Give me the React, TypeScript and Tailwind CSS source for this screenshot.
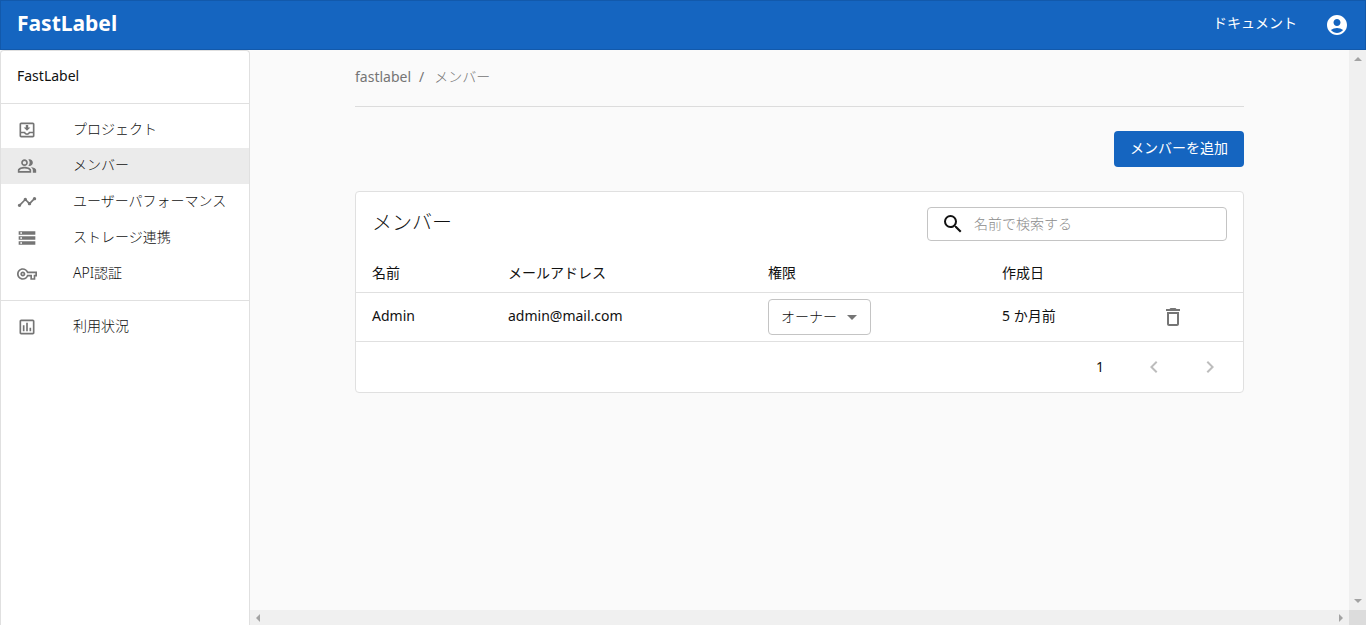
import { useState } from "react";
import type { IconType } from "react-icons";
import {
  MdAccountCircle,
  MdArrowDropDown,
  MdDeleteOutline,
  MdKeyboardArrowLeft,
  MdKeyboardArrowRight,
  MdOutlineAssessment,
  MdOutlineMoveToInbox,
  MdOutlinePeopleAlt,
  MdOutlineVpnKey,
  MdSearch,
  MdStorage,
  MdTimeline,
} from "react-icons/md";

type NavItem = { label: string; icon: IconType; active?: boolean };

const mainNav: NavItem[] = [
  { label: "プロジェクト", icon: MdOutlineMoveToInbox },
  { label: "メンバー", icon: MdOutlinePeopleAlt, active: true },
  { label: "ユーザーパフォーマンス", icon: MdTimeline },
  { label: "ストレージ連携", icon: MdStorage },
  { label: "API認証", icon: MdOutlineVpnKey },
];

const usageNav: NavItem[] = [{ label: "利用状況", icon: MdOutlineAssessment }];

const members = [
  { name: "Admin", email: "admin@mail.com", role: "owner", createdAt: "5 か月前" },
];

function Header() {
  return (
    <header className="flex h-[50px] shrink-0 items-center justify-between border border-[#1259ab] bg-[#1565c0] px-4 text-white">
      <a href="#" className="pb-1 text-[21px] font-bold">
        FastLabel
      </a>
      <div className="flex items-center gap-7">
        <a href="#docs" className="pb-1 font-normal">
          ドキュメント
        </a>
        <button type="button" aria-label="アカウント">
          <MdAccountCircle className="h-6 w-6" />
        </button>
      </div>
    </header>
  );
}

function NavList({ items }: { items: NavItem[] }) {
  return (
    <ul className="border-t border-[#e0e0e0] py-2">
      {items.map(({ label, icon: Icon, active }) => (
        <li key={label}>
          <a
            href="#"
            aria-current={active ? "page" : undefined}
            className={`flex h-9 items-center px-4 ${active ? "bg-[#ebebeb]" : ""}`}
          >
            <Icon className="mr-9 h-5 w-5 shrink-0 text-[#757575]" />
            <span className="pb-0.5 whitespace-nowrap">{label}</span>
          </a>
        </li>
      ))}
    </ul>
  );
}

function Sidebar() {
  return (
    <nav className="w-[250px] shrink-0 rounded-t border border-b-0 border-[#e0e0e0] bg-white">
      <div className="flex h-[52px] items-center px-4 pb-0.5 font-normal">FastLabel</div>
      <NavList items={mainNav} />
      <NavList items={usageNav} />
    </nav>
  );
}

function MembersCard() {
  const [query, setQuery] = useState("");
  const rows = members.filter((m) => m.name.toLowerCase().includes(query.toLowerCase()));

  return (
    <section className="rounded border border-[#e0e0e0] bg-white">
      <div className="flex h-16 items-center justify-between px-4">
        <h1 className="pb-0.5 text-xl">メンバー</h1>
        <label className="flex h-[34px] w-[300px] items-center rounded border border-[#c4c4c4] pl-3">
          <MdSearch className="mx-px h-6 w-6 shrink-0" />
          <input
            type="text"
            aria-label="名前で検索する"
            placeholder="名前で検索する"
            value={query}
            onChange={(e) => setQuery(e.target.value)}
            className="w-full min-w-0 px-2 outline-none placeholder:text-[#8c8c8c]"
          />
        </label>
      </div>

      <table className="w-full table-fixed text-left">
        <colgroup>
          <col className="w-[136px]" />
          <col className="w-[260px]" />
          <col className="w-[234px]" />
          <col className="w-[147px]" />
          <col />
        </colgroup>
        <thead>
          <tr className="h-9 border-b border-[#e0e0e0]">
            <th className="px-4 pb-0.5 font-normal">名前</th>
            <th className="px-4 pb-0.5 font-normal">メールアドレス</th>
            <th className="px-4 pb-0.5 font-normal">権限</th>
            <th className="px-4 pb-0.5 font-normal">作成日</th>
            <td />
          </tr>
        </thead>
        <tbody>
          {rows.map((m) => (
            <tr key={m.email} className="h-[49px] border-b border-[#e0e0e0]">
              <td className="px-4 pb-0.5 font-normal">{m.name}</td>
              <td className="px-4 pb-0.5 font-normal">{m.email}</td>
              <td className="px-4">
                <div className="relative w-[103px]">
                  <select
                    aria-label="権限"
                    defaultValue={m.role}
                    className="block h-9 w-full appearance-none rounded border border-[#c4c4c4] bg-white pr-8 pl-3"
                  >
                    <option value="owner">オーナー</option>
                  </select>
                  <MdArrowDropDown className="pointer-events-none absolute top-1.5 right-[7px] h-6 w-6 text-[#757575]" />
                </div>
              </td>
              <td className="px-4 pb-0.5 font-normal">{m.createdAt}</td>
              <td className="px-4">
                <button type="button" aria-label="削除" className="flex w-12 justify-center">
                  <MdDeleteOutline className="h-6 w-6 text-[#757575]" />
                </button>
              </td>
            </tr>
          ))}
        </tbody>
      </table>

      <div className="flex h-[50px] items-center justify-end gap-2 pr-[9px]">
        <span className="mr-4 pr-0.5 font-normal">1</span>
        <button type="button" aria-label="前のページ" disabled className="flex w-12 justify-center">
          <MdKeyboardArrowLeft className="h-6 w-6 text-[#bdbdbd]" />
        </button>
        <button type="button" aria-label="次のページ" disabled className="flex w-12 justify-center">
          <MdKeyboardArrowRight className="h-6 w-6 text-[#bdbdbd]" />
        </button>
      </div>
    </section>
  );
}

function ScrollArrow({ className }: { className: string }) {
  return (
    <svg viewBox="0 0 8 4" className={className} fill="#a3a3a3" aria-hidden="true">
      <path d="M4 0 8 4H0z" />
    </svg>
  );
}

export default function App() {
  return (
    <div className="flex h-screen flex-col bg-[#fafafa] font-['Noto_Sans','Noto_Sans_CJK_JP',sans-serif] text-sm font-light text-[#111111]">
      <Header />
      <div className="flex min-h-0 flex-1">
        <Sidebar />
        <div className="grid min-w-0 flex-1 grid-cols-[1fr_17px] grid-rows-[1fr_15px]">
          <main className="min-w-0 overflow-hidden px-4">
            <div className="mx-auto max-w-[889px]">
              <div className="flex h-[57px] items-center gap-2 border-b border-[#dcdcdc] pb-0.5 font-normal text-[#757575]">
                <a href="#">fastlabel</a>
                <span>/</span>
                <span className="pl-0.5 font-light">メンバー</span>
              </div>
              <div className="flex justify-end py-6">
                <button type="button" className="h-9 rounded bg-[#1565c0] px-4 pb-0.5 font-normal text-white">
                  メンバーを追加
                </button>
              </div>
              <MembersCard />
            </div>
          </main>
          <div className="flex flex-col items-center justify-between bg-[#f0f0f0] py-[7px]">
            <ScrollArrow className="h-1 w-2" />
            <ScrollArrow className="h-1 w-2 rotate-180" />
          </div>
          <div className="flex items-center justify-between bg-[#f0f0f0] px-1">
            <ScrollArrow className="h-1 w-2 -rotate-90" />
            <ScrollArrow className="h-1 w-2 rotate-90" />
          </div>
          <div className="bg-[#dcdcdc]" />
        </div>
      </div>
    </div>
  );
}
